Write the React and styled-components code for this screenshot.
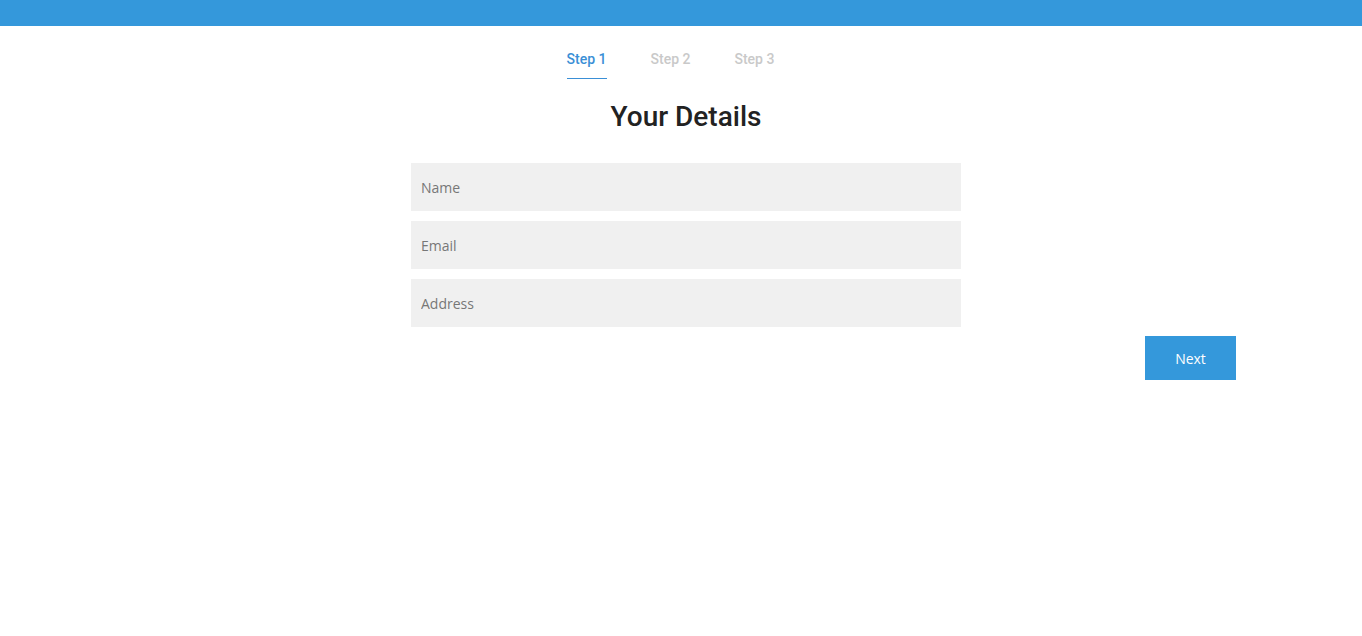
import React from 'react'
import styled, { createGlobalStyle } from 'styled-components'

const GlobalStyle = createGlobalStyle`
    html, body {
        margin: 0;
        padding: 0;
        background: #fff;
    }
    html {
        overflow-y: scroll;
    }
    * {
        box-sizing: border-box;
    }
    ::-webkit-scrollbar {
        width: 16px;
    }
    ::-webkit-scrollbar-track {
        background: #f1f1f1;
    }
    ::-webkit-scrollbar-thumb {
        background: #c1c1c1;
        border: 2px solid #f1f1f1;
        border-width: 0 2px;
    }
    ::-webkit-scrollbar-button:single-button {
        height: 14px;
        background: #f1f1f1;
    }
`

function App() {
  return (
    <Page>
      <GlobalStyle />
      <TopBar />
      <Container>
        <Tabs>
          <Tab active>Step 1</Tab>
          <Tab>Step 2</Tab>
          <Tab>Step 3</Tab>
        </Tabs>
        <Title>Your Details</Title>
        <Form>
          <Field placeholder="Name" />
          <Field placeholder="Email" />
          <Field placeholder="Address" />
        </Form>
        <Actions>
          <NextButton>Next</NextButton>
        </Actions>
      </Container>
    </Page>
  )
}

const Page = styled.div`
    min-height: 650px;
    font-family: 'Open Sans', sans-serif;
`

const TopBar = styled.div`
    height: 26px;
    background: #3498db;
`

const Container = styled.div`
    width: 1100px;
    margin-left: 136px;
    display: flex;
    flex-direction: column;
    align-items: center;
`

const Tabs = styled.div`
    display: flex;
    gap: 44px;
    margin-top: 24px;
    padding-right: 31px;
`

const Tab = styled.div`
    font-family: 'Roboto', sans-serif;
    font-size: 14px;
    font-weight: 500;
    line-height: 18px;
    color: ${p => (p.active ? '#3a8fd6' : '#c9c9c9')};
    padding-bottom: 10px;
    border-bottom: 1px solid ${p => (p.active ? '#3a8fd6' : 'transparent')};
    cursor: pointer;
`

const Title = styled.h1`
    font-family: 'Roboto', sans-serif;
    font-size: 28px;
    font-weight: 500;
    color: #222;
    margin: 20px 0 0;
    line-height: 36px;
`

const Form = styled.div`
    width: 550px;
    display: flex;
    flex-direction: column;
    gap: 10px;
    margin-top: 28px;
`

const Field = styled.input`
    width: 100%;
    height: 48px;
    border: none;
    outline: none;
    background: #f0f0f0;
    padding: 0 10px;
    font-family: 'Open Sans', sans-serif;
    font-size: 14px;
    color: #333;

    &::placeholder {
        color: #777;
    }
`

const Actions = styled.div`
    width: 100%;
    display: flex;
    justify-content: flex-end;
    margin-top: 9px;
`

const NextButton = styled.button`
    width: 91px;
    height: 44px;
    border: none;
    background: #3498db;
    color: #fff;
    font-family: 'Open Sans', sans-serif;
    font-size: 14px;
    cursor: pointer;
`

export default App
